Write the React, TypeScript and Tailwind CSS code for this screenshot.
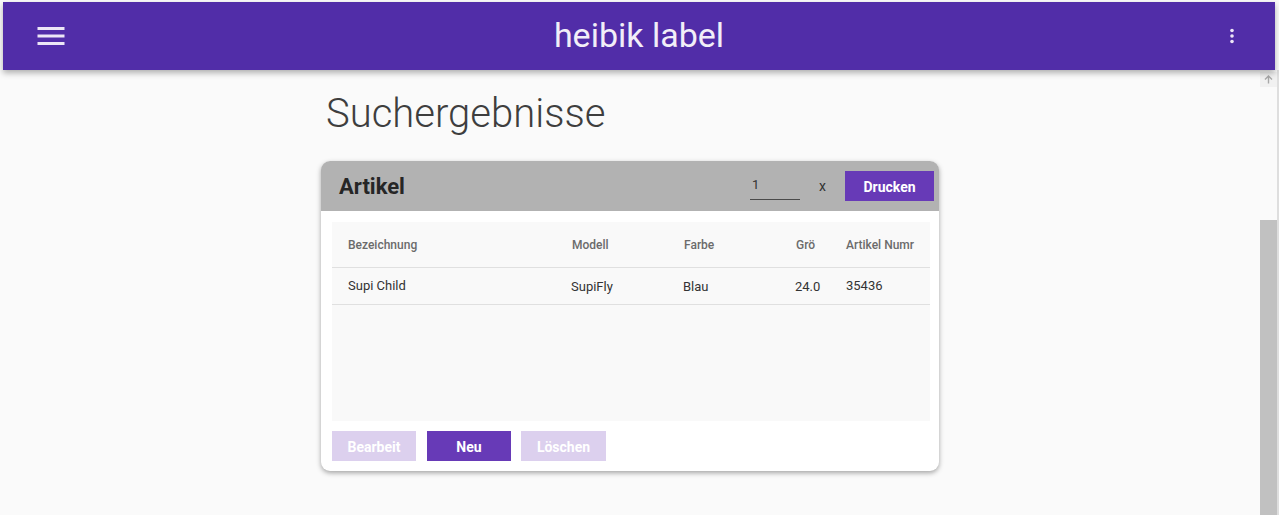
import React from "react";

const font = { fontFamily: "Roboto, 'Noto Sans', 'Liberation Sans', sans-serif" };

function MenuIcon() {
  return (
    <svg width="36" height="36" viewBox="0 0 24 24" fill="#ece6f6">
      <path d="M3 18h18v-2H3v2zm0-5h18v-2H3v2zm0-7v2h18V6H3z" />
    </svg>
  );
}

function MoreIcon() {
  return (
    <svg width="24" height="24" viewBox="0 0 24 24" fill="#ece6f6">
      <circle cx="12" cy="6.5" r="1.8" />
      <circle cx="12" cy="12" r="1.8" />
      <circle cx="12" cy="17.5" r="1.8" />
    </svg>
  );
}

export default function App() {
  return (
    <div
      className="w-[1279px] h-[515px] bg-[#fafafa] overflow-hidden flex flex-col"
      style={font}
    >
      <header className="relative z-10 mt-[2px] ml-[3px] mr-[4px] h-[68px] shrink-0 bg-[#512da8] flex items-center shadow-[0_3px_6px_rgba(0,0,0,0.3)]">
        <div className="w-[66px] flex justify-end">
          <div className="w-[36px] h-[36px] flex items-center justify-center">
            <MenuIcon />
          </div>
        </div>
        <div className="flex-1 text-center text-[34px] leading-[38px] text-[#f2eef8] -mt-[3px]">
          heibik label
        </div>
        <div className="w-[66px] flex justify-start">
          <div className="ml-[11px] w-[24px] h-[24px] flex items-center justify-center">
            <MoreIcon />
          </div>
        </div>
      </header>

      <div className="flex flex-1 min-h-0">
        <main className="flex-1 min-w-0">
          <div className="w-[618px] mx-auto">
            <h1 className="mt-[21px] ml-[5px] text-[40px] leading-[46px] font-light text-[#3e3e3e]">
              Suchergebnisse
            </h1>
            <div className="mt-[24px] rounded-[9px] bg-white overflow-hidden shadow-[0_2px_5px_rgba(0,0,0,0.35)]">
              <div className="h-[50px] bg-[#b2b2b2] flex items-center pl-[18px] pr-[5px]">
                <div className="flex-1 text-[22px] font-bold text-[#262626]">Artikel</div>
                <div className="w-[50px] h-[25px] border-b border-[#4a4a4a] text-[13px] text-[#333] pl-[2px] leading-[20px] mb-[-2px]">
                  1
                </div>
                <div className="w-[45px] text-center text-[14px] text-[#333]">x</div>
                <button className="w-[89px] h-[30px] bg-[#673ab7] text-white text-[14px] font-bold pt-[2px]">
                  Drucken
                </button>
              </div>
              <div className="pl-[11px] pr-[9px] pt-[11px] pb-[10px]">
                <div className="h-[199px] bg-[#f9f9f9]">
                  <div className="h-[46px] grid grid-cols-[224px_112px_112px_50px_1fr] items-center pl-[16px] border-b border-[#e0e0e0] text-[12px] font-medium text-[#6b6b6b]">
                    <div>Bezeichnung</div>
                    <div>Modell</div>
                    <div>Farbe</div>
                    <div>Grö</div>
                    <div className="whitespace-nowrap">Artikel Numr</div>
                  </div>
                  <div className="h-[37px] grid grid-cols-[224px_112px_112px_50px_1fr] items-center pl-[16px] border-b border-[#e0e0e0] text-[13px] text-[#333]">
                    <div className="-mt-[1px]">Supi Child</div>
                    <div className="-ml-[1px] mt-[1px]">SupiFly</div>
                    <div className="-ml-[1px] mt-[1px]">Blau</div>
                    <div className="-ml-[1px] mt-[1px]">24.0</div>
                    <div className="-mt-[1px]">35436</div>
                  </div>
                </div>
                <div className="mt-[10px] flex">
                  <button className="w-[84px] h-[30px] bg-[#dcd0ee] text-white text-[14px] font-bold pt-[2px]">
                    Bearbeit
                  </button>
                  <button className="ml-[11px] w-[84px] h-[30px] bg-[#673ab7] text-white text-[14px] font-bold pt-[2px]">
                    Neu
                  </button>
                  <button className="ml-[10px] w-[85px] h-[30px] bg-[#dcd0ee] text-white text-[14px] font-bold pt-[2px]">
                    Löschen
                  </button>
                </div>
              </div>
            </div>
          </div>
        </main>
        <div className="w-[17px] flex flex-col mt-[2px]">
          <div className="h-[15px] bg-[#f1f1f1] flex items-center justify-center">
            <svg width="9" height="9" viewBox="0 0 9 9" fill="none" stroke="#a8a8a8" strokeWidth="1.4">
              <path d="M4.5 8.5V1M1 4.5l3.5-3.5L8 4.5" />
            </svg>
          </div>
          <div className="h-[133px] bg-[#fafafa]" />
          <div className="flex-1 bg-[#c1c1c1]" />
        </div>
        <div className="w-[2px] bg-[#dedede]" />
      </div>
    </div>
  );
}
